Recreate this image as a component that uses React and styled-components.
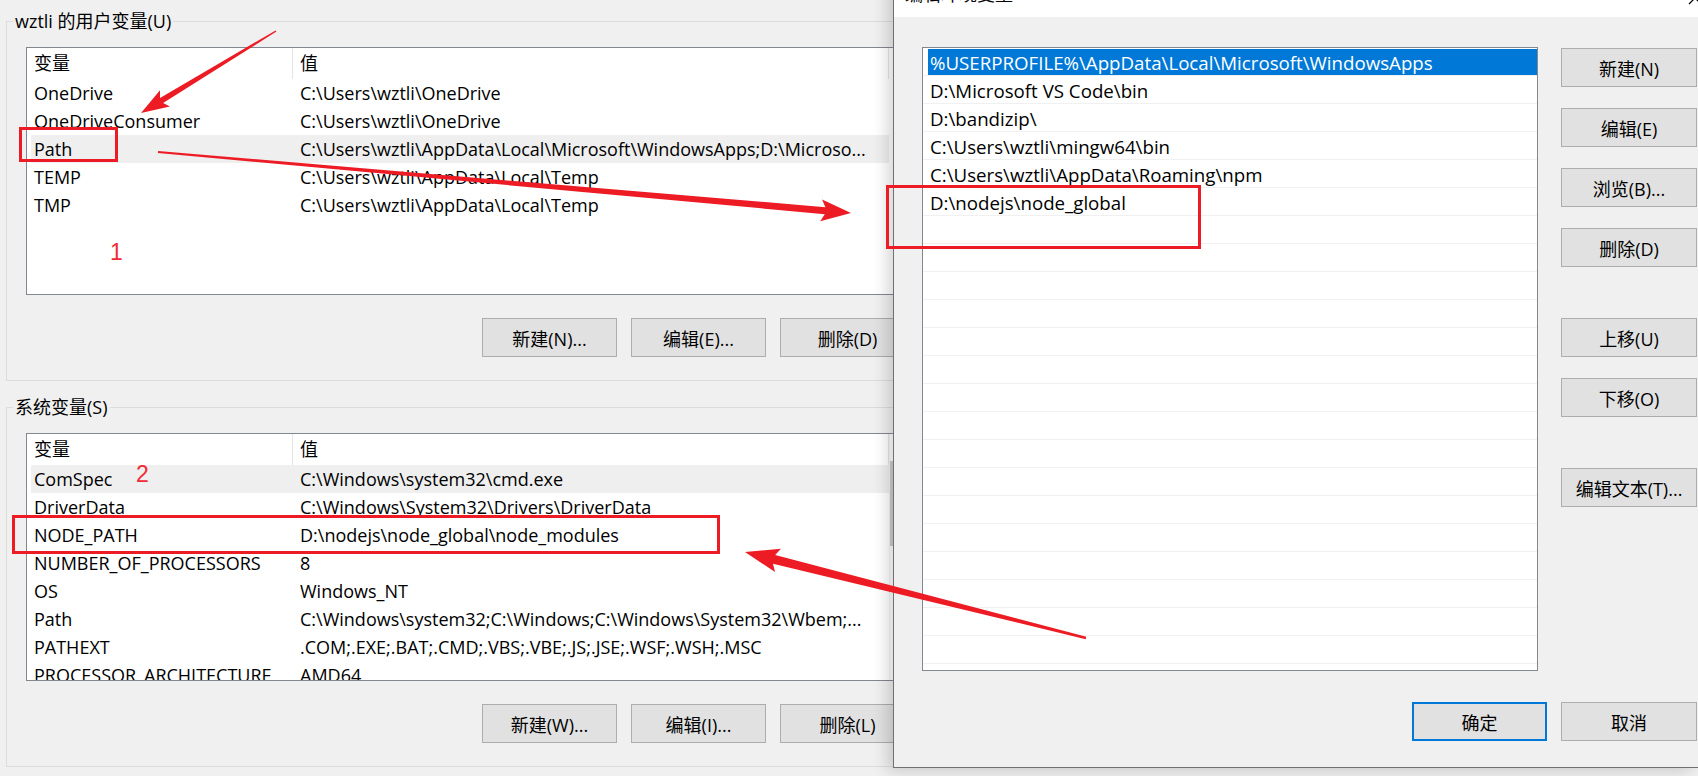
import React from 'react';
import styled, { createGlobalStyle } from 'styled-components';

const GlobalStyle = createGlobalStyle`
  html, body {
    margin: 0;
    padding: 0;
    background: #f0f0f0;
    overflow: hidden;
  }
  body {
    font-family: "Open Sans", "Noto Sans CJK SC", sans-serif;
  }
  * { box-sizing: border-box; }
`;

const Screen = styled.div`
  position: relative;
  width: 1698px;
  height: 776px;
  overflow: hidden;
  background: #f0f0f0;
  color: #000;
  font-size: 18px;
`;

/* ---------- left window: environment variables ---------- */

const EnvWindow = styled.div`
  position: absolute;
  left: 0;
  top: 0;
  width: 960px;
  height: 776px;
  padding: 9px 0 0 6px;
  background: #f0f0f0;
`;

const GroupBox = styled.fieldset`
  margin: ${p => (p.$first ? '0' : '14px')} 0 0 0;
  width: 928px;
  min-width: 0;
  padding: 14px 18px 23px 19px;
  border: 1px solid #dcdcdc;
`;

const Legend = styled.legend`
  margin-left: -13px;
  padding: 0 2px;
  line-height: 24px;
  font-size: 18px;
`;

const ListView = styled.div`
  display: flex;
  width: 889px;
  height: 248px;
  border: 1px solid #828790;
  background: #fff;
  overflow: hidden;
`;

const ListBody = styled.div`
  flex: 1;
  display: flex;
  flex-direction: column;
`;

const HeaderRow = styled.div`
  display: flex;
  height: 31px;
  padding-left: 4px;
  flex-shrink: 0;
`;

const HeadCell = styled.div`
  width: ${p => p.$w}px;
  padding-left: ${p => p.$pad}px;
  line-height: 31px;
  border-right: 1px solid #e5e5e5;
`;

const VarRow = styled.div`
  display: flex;
  width: 858px;
  height: 28px;
  margin-left: 4px;
  flex-shrink: 0;
  background: ${p => (p.$hl ? '#efefef' : 'transparent')};
`;

const Cell = styled.div`
  width: ${p => p.$w}px;
  padding-left: ${p => p.$pad}px;
  padding-right: 4px;
  line-height: 28px;
  white-space: nowrap;
  overflow: hidden;
  text-overflow: ellipsis;
`;

const ScrollBar = styled.div`
  width: 25px;
  flex-shrink: 0;
  background: #fff;
  border-left: 1px solid #f4f4f4;
`;

const Thumb = styled.div`
  margin-top: 27px;
  height: 85px;
  background: #cdcdcd;
`;

const ButtonRow = styled.div`
  display: flex;
  justify-content: flex-end;
  gap: 14px;
  width: 889px;
  margin-top: 23px;
`;

const WinButton = styled.button`
  width: ${p => p.$w || 135}px;
  height: 39px;
  padding: 0;
  margin: 0;
  background: #e1e1e1;
  border: ${p => (p.$default ? '2px solid #0078d7' : '1px solid #adadad')};
  font-family: inherit;
  font-size: 18px;
  color: #000;
  white-space: nowrap;
`;

/* ---------- dialog: edit environment variable ---------- */

const Dialog = styled.div`
  position: absolute;
  left: 893px;
  top: -30px;
  width: 805px;
  height: 798px;
  display: flex;
  flex-direction: column;
  background: #f0f0f0;
  border-left: 1px solid #707070;
  border-bottom: 1px solid #707070;
  box-shadow: -6px 3px 14px rgba(0, 0, 0, 0.16);
`;

const TitleBar = styled.div`
  display: flex;
  align-items: flex-start;
  height: 47px;
  padding: 12px 0 0 11px;
  background: #fff;
  line-height: 24px;
  flex-shrink: 0;
`;

const CloseIcon = styled.svg`
  margin-left: auto;
  margin-top: 9px;
  margin-right: -4px;
`;

const DialogBody = styled.div`
  flex: 1;
  display: flex;
  flex-direction: column;
  padding: 30px 1px 26px 28px;
`;

const MainRow = styled.div`
  display: flex;
  gap: 23px;
  height: 624px;
`;

const PathList = styled.div`
  width: 616px;
  height: 624px;
  border: 1px solid #828790;
  background: #fff;
  overflow: hidden;
`;

const PathRow = styled.div`
  display: flex;
  height: 28px;
  border-bottom: 1px solid #f0f0f0;
`;

const PathText = styled.div`
  flex: 1;
  margin: 1px 0 0 5px;
  padding: 1px 0 0 2px;
  font-size: 18.7px;
  line-height: 25px;
  white-space: nowrap;
  background: ${p => (p.$sel ? '#0078d7' : 'transparent')};
  color: ${p => (p.$sel ? '#fff' : '#000')};
`;

const SideColumn = styled.div`
  display: flex;
  flex-direction: column;
  padding-top: 1px;
`;

const SideButton = styled(WinButton)`
  width: 136px;
  margin-top: ${p => (p.$spaced ? 51 : 21)}px;
  &:first-child { margin-top: 0; }
`;

const Footer = styled.div`
  display: flex;
  justify-content: flex-end;
  gap: 14px;
  margin-top: 31px;
`;

/* ---------- red annotations ---------- */

const Overlay = styled.svg`
  position: absolute;
  left: 0;
  top: 0;
  pointer-events: none;
`;

const Mark = styled.span`
  position: absolute;
  left: ${p => p.$x}px;
  top: ${p => p.$y}px;
  font-family: "Liberation Sans", sans-serif;
  font-size: 23px;
  line-height: 23px;
  color: #f02b35;
`;

const arrow = (tx, ty, px, py, w0, w1, hl, hw) => {
  const dx = px - tx;
  const dy = py - ty;
  const L = Math.hypot(dx, dy);
  const ux = dx / L;
  const uy = dy / L;
  const nx = -uy;
  const ny = ux;
  const hx = px - ux * hl;
  const hy = py - uy * hl;
  const bx = hx - ux * 4;
  const by = hy - uy * 4;
  const pts = [
    [tx + (nx * w0) / 2, ty + (ny * w0) / 2],
    [hx + (nx * w1) / 2, hy + (ny * w1) / 2],
    [bx + (nx * hw) / 2, by + (ny * hw) / 2],
    [px, py],
    [bx - (nx * hw) / 2, by - (ny * hw) / 2],
    [hx - (nx * w1) / 2, hy - (ny * w1) / 2],
    [tx - (nx * w0) / 2, ty - (ny * w0) / 2],
  ];
  return pts.map(p => p.map(v => v.toFixed(1)).join(',')).join(' ');
};

/* ---------- data ---------- */

const userVars = [
  ['OneDrive', String.raw`C:\Users\wztli\OneDrive`],
  ['OneDriveConsumer', String.raw`C:\Users\wztli\OneDrive`],
  ['Path', String.raw`C:\Users\wztli\AppData\Local\Microsoft\WindowsApps;D:\Microso...`, true],
  ['TEMP', String.raw`C:\Users\wztli\AppData\Local\Temp`],
  ['TMP', String.raw`C:\Users\wztli\AppData\Local\Temp`],
];

const systemVars = [
  ['ComSpec', String.raw`C:\Windows\system32\cmd.exe`, true],
  ['DriverData', String.raw`C:\Windows\System32\Drivers\DriverData`],
  ['NODE_PATH', String.raw`D:\nodejs\node_global\node_modules`],
  ['NUMBER_OF_PROCESSORS', '8'],
  ['OS', 'Windows_NT'],
  ['Path', String.raw`C:\Windows\system32;C:\Windows;C:\Windows\System32\Wbem;...`],
  ['PATHEXT', '.COM;.EXE;.BAT;.CMD;.VBS;.VBE;.JS;.JSE;.WSF;.WSH;.MSC'],
  ['PROCESSOR_ARCHITECTURE', 'AMD64'],
];

const pathEntries = [
  String.raw`%USERPROFILE%\AppData\Local\Microsoft\WindowsApps`,
  String.raw`D:\Microsoft VS Code\bin`,
  String.raw`D:\bandizip\ `.trim(),
  String.raw`C:\Users\wztli\mingw64\bin`,
  String.raw`C:\Users\wztli\AppData\Roaming\npm`,
  String.raw`D:\nodejs\node_global`,
];

function VarList({ rows, scroll }) {
  return (
    <ListView>
      <ListBody>
        <HeaderRow>
          <HeadCell $w={262} $pad={3}>变量</HeadCell>
          <HeadCell $w={596} $pad={7}>值</HeadCell>
        </HeaderRow>
        {rows.map(([name, value, hl]) => (
          <VarRow key={name + value} $hl={hl}>
            <Cell $w={262} $pad={3}>{name}</Cell>
            <Cell $w={596} $pad={7}>{value}</Cell>
          </VarRow>
        ))}
      </ListBody>
      {scroll && (
        <ScrollBar>
          <Thumb />
        </ScrollBar>
      )}
    </ListView>
  );
}

export default function App() {
  const emptyRows = Array.from({ length: 17 });
  return (
    <Screen>
      <GlobalStyle />

      <EnvWindow>
        <GroupBox $first>
          <Legend>wztli 的用户变量(U)</Legend>
          <VarList rows={userVars} />
          <ButtonRow>
            <WinButton>新建(N)...</WinButton>
            <WinButton>编辑(E)...</WinButton>
            <WinButton>删除(D)</WinButton>
          </ButtonRow>
        </GroupBox>

        <GroupBox>
          <Legend>系统变量(S)</Legend>
          <VarList rows={systemVars} scroll />
          <ButtonRow>
            <WinButton>新建(W)...</WinButton>
            <WinButton>编辑(I)...</WinButton>
            <WinButton>删除(L)</WinButton>
          </ButtonRow>
        </GroupBox>
      </EnvWindow>

      <Dialog>
        <TitleBar>
          <span>编辑环境变量</span>
          <CloseIcon width="14" height="14" viewBox="0 0 14 14">
            <path d="M1 1 L13 13 M13 1 L1 13" stroke="#000" strokeWidth="1.2" fill="none" />
          </CloseIcon>
        </TitleBar>
        <DialogBody>
          <MainRow>
            <PathList>
              {pathEntries.map((p, i) => (
                <PathRow key={p}>
                  <PathText $sel={i === 0}>{p}</PathText>
                </PathRow>
              ))}
              {emptyRows.map((_, i) => (
                <PathRow key={'e' + i}>
                  <PathText />
                </PathRow>
              ))}
            </PathList>
            <SideColumn>
              <SideButton>新建(N)</SideButton>
              <SideButton>编辑(E)</SideButton>
              <SideButton>浏览(B)...</SideButton>
              <SideButton>删除(D)</SideButton>
              <SideButton $spaced>上移(U)</SideButton>
              <SideButton>下移(O)</SideButton>
              <SideButton $spaced>编辑文本(T)...</SideButton>
            </SideColumn>
          </MainRow>
          <Footer>
            <WinButton $default>确定</WinButton>
            <WinButton $w={136}>取消</WinButton>
          </Footer>
        </DialogBody>
      </Dialog>

      <Overlay width="1698" height="776" viewBox="0 0 1698 776">
        <g fill="#ed1c24">
          <polygon points={arrow(276, 31, 141, 113, 1.5, 6, 24, 19)} />
          <polygon points={arrow(158, 152, 851, 213, 2, 7, 26, 22)} />
          <polygon points={arrow(1086, 638, 745, 552, 2.5, 9, 30, 24)} />
        </g>
        <g fill="none" stroke="#ed1c24" strokeWidth="3">
          <rect x="20.5" y="128.5" width="96" height="32" />
          <rect x="887.5" y="186.5" width="312" height="61" />
          <rect x="13.5" y="516.5" width="705" height="36" />
        </g>
      </Overlay>
      <Mark $x={110} $y={241}>1</Mark>
      <Mark $x={136} $y={463}>2</Mark>
    </Screen>
  );
}
